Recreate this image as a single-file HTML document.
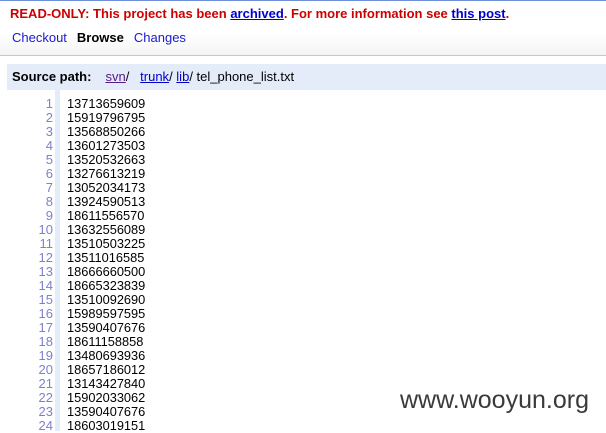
<!DOCTYPE html>
<html><head><style>
body{margin:0;width:606px;height:431px;overflow:hidden;background:#fff;font-family:"Liberation Sans",Arial,sans-serif;position:relative}
.top{height:54px;border-top:1px solid #6f8fd8;border-bottom:1px solid #c8c8c8;background:linear-gradient(#fff 60%,#f4f4f4)}
.ro{position:absolute;left:10px;top:6px;font-size:13px;font-weight:bold;color:#c00}
.ro a{color:#00c;text-decoration:underline}
.nav{position:absolute;left:12px;top:30px;font-size:13px}
.nav span{margin-right:10px;color:#1a1acc}
.nav b{margin-right:10px;color:#000}
.sp{position:absolute;left:7px;top:64px;width:599px;height:26px;background:#e5ecf9;font-size:13px;line-height:26px}
.sp b{margin-left:5px;margin-right:14px}
.sp a{color:#00c;text-decoration:underline}
.sp a.v{color:#551a8b}
.bar{position:absolute;left:55px;top:90px;width:5px;height:341px;background:#e5ecf9}
.ln{position:absolute;top:97px;left:0;width:53px;text-align:right;font-family:"Liberation Sans",sans-serif;font-size:13px;line-height:14px;color:#7f7fcc;white-space:pre}
.code{position:absolute;top:97px;left:67px;font-family:"Liberation Sans",sans-serif;font-size:12.8px;line-height:14px;color:#000;white-space:pre}
.wm{position:absolute;left:400px;top:386px;font-size:25px;color:#3a3a3a;font-family:"Liberation Sans",sans-serif}
</style></head><body>
<div class="top"></div>
<div class="ro">READ-ONLY: This project has been <a>archived</a>. For more information see <a>this post</a>.</div>
<div class="nav"><span>Checkout</span><b>Browse</b><span>Changes</span></div>
<div class="sp"><b>Source path:</b><a class="v">svn</a>/&nbsp;&nbsp; <a>trunk</a>/ <a>lib</a>/ tel_phone_list.txt</div>
<div class="bar"></div>
<div class="ln">1
2
3
4
5
6
7
8
9
10
11
12
13
14
15
16
17
18
19
20
21
22
23
24</div>
<div class="code">13713659609
15919796795
13568850266
13601273503
13520532663
13276613219
13052034173
13924590513
18611556570
13632556089
13510503225
13511016585
18666660500
18665323839
13510092690
15989597595
13590407676
18611158858
13480693936
18657186012
13143427840
15902033062
13590407676
18603019151</div>
<div class="wm">www.wooyun.org</div>
</body></html>
